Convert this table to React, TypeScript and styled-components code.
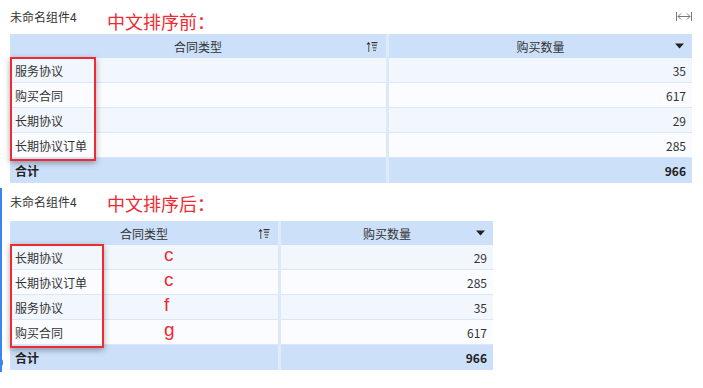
import React, { FC } from "react";
import styled, { createGlobalStyle } from "styled-components";

const GlobalStyle = createGlobalStyle`
  body {
    margin: 0;
    background: #ffffff;
    font-family: "Noto Sans CJK SC", "Noto Sans", sans-serif;
    color: #333333;
  }
`;

const Page = styled.div`
  width: 703px;
  height: 388px;
  display: flex;
  flex-flow: column nowrap;
`;

const Widget = styled.div<{ $selected?: boolean }>`
  position: relative;
  display: flex;
  flex-flow: column nowrap;
  padding: 0 0 ${(p) => (p.$selected ? "2px" : "3px")} ${(p) => (p.$selected ? "8px" : "10px")};
  margin-top: ${(p) => (p.$selected ? "2px" : "0")};
  border-left: ${(p) => (p.$selected ? "2px solid #3a86f0" : "none")};

  &::after {
    content: "";
    display: ${(p) => (p.$selected ? "block" : "none")};
    position: absolute;
    left: -4px;
    bottom: 6px;
    width: 5px;
    height: 7px;
    border-radius: 3px;
    background: #3a86f0;
  }
`;

const WidgetHeader = styled.div<{ $height: number }>`
  height: ${(p) => p.$height}px;
  display: flex;
  align-items: flex-start;
  justify-content: space-between;
  padding-right: 11px;
`;

const TitleGroup = styled.div`
  display: flex;
  align-items: flex-start;
`;

const Title = styled.span<{ $top: number }>`
  font-size: 12px;
  line-height: 17px;
  padding-top: ${(p) => p.$top}px;
  color: #333;
  width: 97px;
`;

const Note = styled.span<{ $top: number }>`
  font-size: 18px;
  line-height: 24px;
  padding-top: ${(p) => p.$top}px;
  color: #ee2a33;
`;

const ExpandButton = styled.div`
  padding-top: 12px;
  display: flex;
`;

const Table = styled.div<{ $first: number; $second: number }>`
  display: grid;
  grid-template-columns: ${(p) => p.$first}px ${(p) => p.$second}px;
  column-gap: 3px;
  width: ${(p) => p.$first + p.$second + 3}px;
  font-size: 12px;
`;

const HeadCell = styled.div<{ $divider?: boolean }>`
  height: 24px;
  background: #cde0f9;
  display: flex;
  align-items: center;
  justify-content: center;
  position: relative;
  color: #333;
  box-shadow: ${(p) => (p.$divider ? "3px 0 0 #dfeafb" : "none")};
`;

const HeadIcon = styled.span`
  position: absolute;
  right: 8px;
  top: 0;
  bottom: 0;
  display: flex;
  align-items: center;
`;

const Body = styled.div`
  grid-column: 1 / span 2;
  position: relative;
  display: grid;
  grid-template-columns: subgrid;
`;

const Cell = styled.div<{ $alt: boolean; $right?: boolean; $divider?: boolean }>`
  height: 24px;
  border-bottom: 1px solid #dae7f8;
  background: ${(p) => (p.$alt ? "#fafcff" : "#f2f7fe")};
  display: flex;
  align-items: center;
  justify-content: ${(p) => (p.$right ? "flex-end" : "flex-start")};
  padding: 0 6px 0 5px;
  position: relative;
  color: #333;
  box-shadow: ${(p) => (p.$divider ? "3px 0 0 #dce9fa" : "none")};
`;

const TotalCell = styled.div<{ $right?: boolean; $divider?: boolean }>`
  height: 25px;
  background: #cde0f9;
  display: flex;
  align-items: center;
  justify-content: ${(p) => (p.$right ? "flex-end" : "flex-start")};
  padding: 0 6px 0 5px;
  font-weight: bold;
  color: #222;
  box-shadow: ${(p) => (p.$divider ? "3px 0 0 #dfeafb" : "none")};
`;

const Letter = styled.span`
  position: absolute;
  left: 154px;
  top: -2px;
  font-family: "Liberation Sans", Arial, sans-serif;
  font-size: 19px;
  line-height: 24px;
  color: #ee2a33;
`;

const Highlight = styled.div<{ $width: number }>`
  position: absolute;
  left: 0;
  top: -1px;
  width: ${(p) => p.$width}px;
  height: 104px;
  box-sizing: border-box;
  border: 2px solid #ee2a33;
  box-shadow: 0 2px 6px rgba(0, 0, 0, 0.35);
  pointer-events: none;
`;

const SortIcon: FC = () => (
  <svg width="12" height="11" viewBox="0 0 12 11">
    <path d="M2.5 1 L0.5 3.5 H4.5 Z" fill="#222" />
    <rect x="2" y="3" width="1.4" height="8" fill="#777" />
    <rect x="5.5" y="1" width="6" height="1.2" fill="#333" />
    <rect x="6" y="3.6" width="5" height="1.2" fill="#444" />
    <rect x="6.5" y="6.2" width="4" height="1.2" fill="#555" />
    <rect x="7" y="8.8" width="3" height="1.2" fill="#666" />
  </svg>
);

const DropIcon: FC = () => (
  <svg width="9" height="6" viewBox="0 0 9 6">
    <path d="M0 0.5 H9 L4.5 5.5 Z" fill="#222" />
  </svg>
);

const ExpandIcon: FC = () => (
  <svg width="16" height="9" viewBox="0 0 16 9">
    <path
      d="M0.5 0 V9 M15.5 0 V9 M5 1.5 L2 4.5 L5 7.5 M11 1.5 L14 4.5 L11 7.5 M2 4.5 H14"
      stroke="#777"
      strokeWidth="1"
      fill="none"
    />
  </svg>
);

interface Row {
  name: string;
  count: number;
  letter?: string;
}

interface PivotProps {
  rows: Row[];
  first: number;
  second: number;
  boxWidth: number;
}

const Pivot: FC<PivotProps> = ({ rows, first, second, boxWidth }) => {
  const total = rows.reduce((sum, r) => sum + r.count, 0);
  return (
    <Table $first={first} $second={second}>
      <HeadCell $divider>
        合同类型
        <HeadIcon>
          <SortIcon />
        </HeadIcon>
      </HeadCell>
      <HeadCell>
        购买数量
        <HeadIcon>
          <DropIcon />
        </HeadIcon>
      </HeadCell>
      <Body>
        {rows.map((r, i) => (
          <React.Fragment key={r.name}>
            <Cell $alt={i % 2 === 1} $divider>
              {r.name}
              {r.letter && <Letter>{r.letter}</Letter>}
            </Cell>
            <Cell $alt={i % 2 === 1} $right>
              {r.count}
            </Cell>
          </React.Fragment>
        ))}
        <Highlight $width={boxWidth} />
      </Body>
      <TotalCell $divider>合计</TotalCell>
      <TotalCell $right>{total}</TotalCell>
    </Table>
  );
};

const before: Row[] = [
  { name: "服务协议", count: 35 },
  { name: "购买合同", count: 617 },
  { name: "长期协议", count: 29 },
  { name: "长期协议订单", count: 285 },
];

const after: Row[] = [
  { name: "长期协议", count: 29, letter: "c" },
  { name: "长期协议订单", count: 285, letter: "c" },
  { name: "服务协议", count: 35, letter: "f" },
  { name: "购买合同", count: 617, letter: "g" },
];

const App: FC = (): JSX.Element => {
  return (
    <Page>
      <GlobalStyle />
      <Widget>
        <WidgetHeader $height={34}>
          <TitleGroup>
            <Title $top={8}>未命名组件4</Title>
            <Note $top={9}>中文排序前：</Note>
          </TitleGroup>
          <ExpandButton>
            <ExpandIcon />
          </ExpandButton>
        </WidgetHeader>
        <Pivot rows={before} first={376} second={303} boxWidth={86} />
      </Widget>
      <Widget $selected>
        <WidgetHeader $height={33}>
          <TitleGroup>
            <Title $top={5}>未命名组件4</Title>
            <Note $top={3}>中文排序后：</Note>
          </TitleGroup>
        </WidgetHeader>
        <Pivot rows={after} first={268} second={212} boxWidth={94} />
      </Widget>
    </Page>
  );
};

export default App;
